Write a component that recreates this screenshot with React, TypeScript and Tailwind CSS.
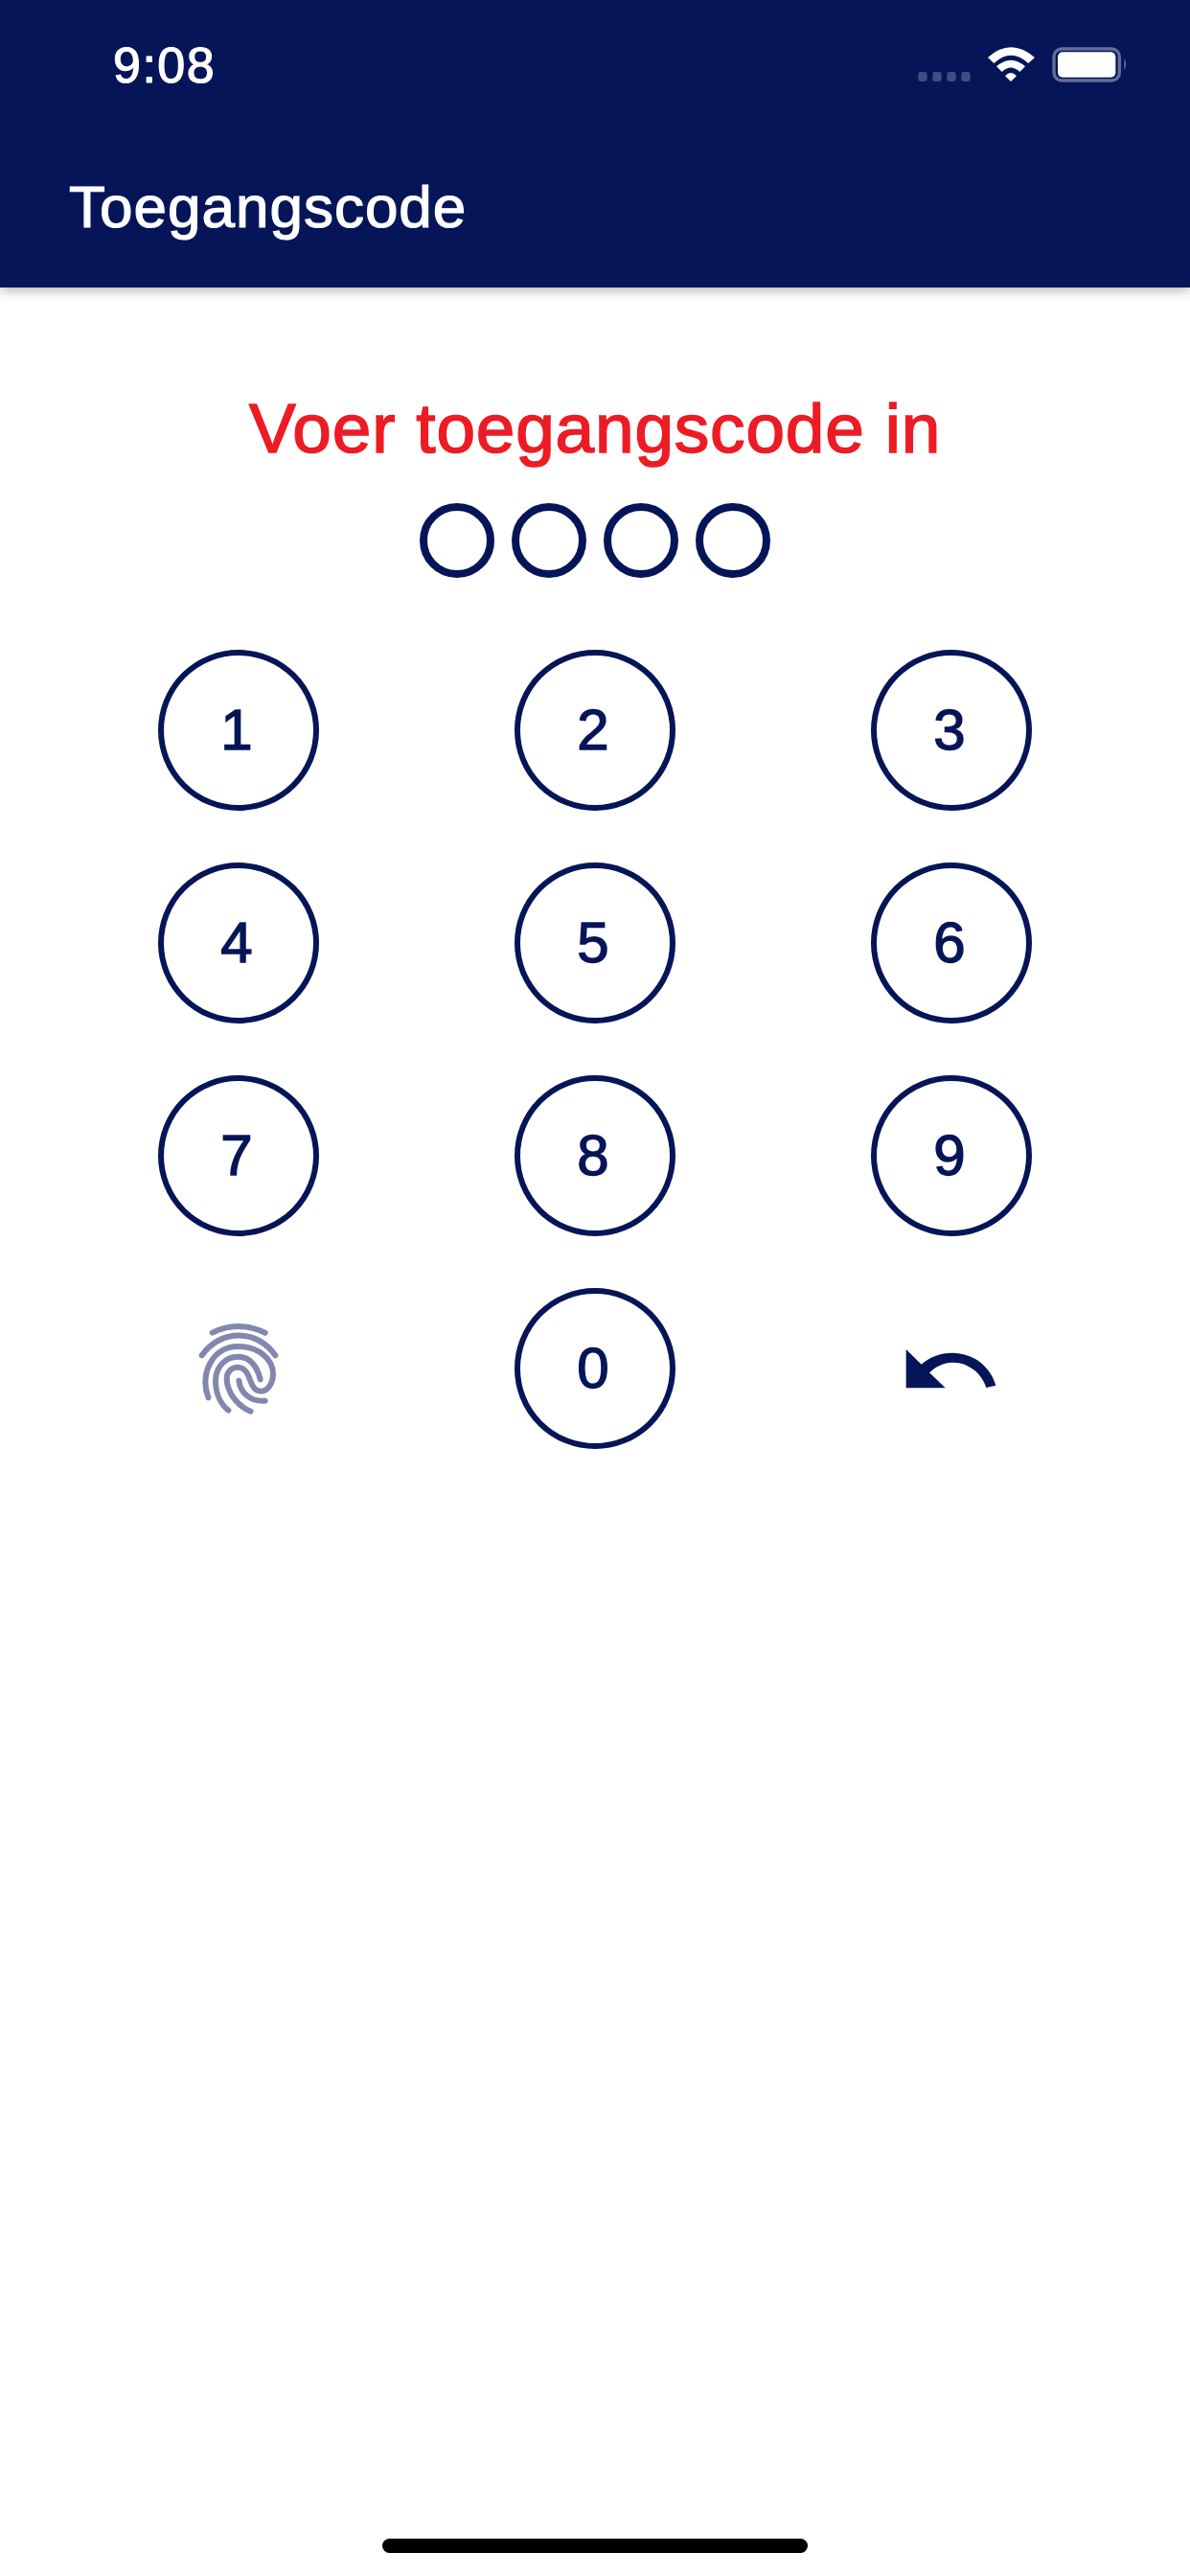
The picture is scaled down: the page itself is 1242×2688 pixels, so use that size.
export default function App() {
  const keys = ["1", "2", "3", "4", "5", "6", "7", "8", "9"];
  const circle =
    "w-[168px] h-[168px] rounded-full border-[6px] border-[#051557] flex items-center justify-center pr-[4px] text-[60px] leading-none text-[#051557] [-webkit-text-stroke:1.4px_#051557]";
  return (
    <div className="w-[1242px] h-[2688px] bg-white flex flex-col font-['Liberation_Sans',Arial,sans-serif]">
      <header className="h-[300px] bg-[#051557] shadow-[0_3px_12px_rgba(0,0,0,0.3)] flex flex-col shrink-0">
        <div className="flex justify-between items-start pt-[30px] h-[100px]">
          <span className="pl-[118px] text-[52px] leading-[76px] tracking-[1.5px] text-white [-webkit-text-stroke:1.2px_#fff]">9:08</span>
          <svg width="260" height="70" viewBox="0 0 780 210" className="mr-[52px]">
            <g fill="#414c80">
              <rect x="85" y="135" width="28" height="30" rx="8" />
              <rect x="130" y="135" width="28" height="30" rx="8" />
              <rect x="175" y="135" width="28" height="30" rx="8" />
              <rect x="220" y="135" width="28" height="30" rx="8" />
            </g>
            <g fill="#fff">
              <path d="M303 90 Q375 26 450 90 L430 108 Q375 58 322 108 Z" />
              <path d="M330 118 Q375 78 420 118 L403 135 Q375 108 347 135 Z" />
              <path d="M357 148 Q375 128 393 148 L375 165 Z" />
            </g>
            <rect x="510" y="63" width="205" height="99" rx="24" fill="none" stroke="#656e9a" strokeWidth="10" />
            <rect x="522" y="73" width="181" height="79" rx="15" fill="#fff" />
            <path d="M730 93 Q741 110 730 130 Z" fill="#656e9a" />
          </svg>
        </div>
        <div className="pl-[72px] text-[62px] leading-[72px] mt-[80px] tracking-[1px] text-white [-webkit-text-stroke:1.2px_#fff]">Toegangscode</div>
      </header>

      <main className="flex flex-col items-center flex-1">
        <h1 className="mt-[105px] text-[73px] leading-[84px] tracking-[0.8px] text-[#ed1c24] font-normal [-webkit-text-stroke:1.6px_#ed1c24]">Voer toegangscode in</h1>
        <div className="mt-[36px] flex gap-[18px]">
          {[0, 1, 2, 3].map((i) => (
            <div key={i} className="w-[78px] h-[78px] rounded-full border-[8px] border-[#051557]" />
          ))}
        </div>
        <div className="mt-[75px] w-full px-[63px] grid grid-cols-3 gap-y-[54px] justify-items-center">
          {keys.map((k) => (
            <div key={k} className={circle}>{k}</div>
          ))}
          <div className="w-[168px] h-[168px]">
            <svg width="168" height="168" viewBox="-45 -18 504 504" fill="none" stroke="#8288ad" strokeWidth="18" strokeLinecap="round">
              <path d="M125 122 Q205 82 290 122" />
              <path d="M92 193 C150 110 265 110 322 193" />
              <path d="M112 325 C85 250 125 165 205 165 C270 165 315 205 315 250 C315 285 295 305 278 305 C258 305 250 290 243 270 C235 245 222 230 205 230 C185 230 170 245 170 265 C170 305 200 350 245 368" />
              <path d="M275 268 C265 225 240 197 205 197 C165 197 135 230 135 272 C135 310 150 345 175 365" />
              <path d="M208 272 C212 310 245 340 290 335" />
            </svg>
          </div>
          <div className={circle}>0</div>
          <div className="w-[168px] h-[168px]">
            <svg width="168" height="168" viewBox="-33 -108 504 504" fill="#051557">
              <path d="M77 84 L125 131 C150 108 185 95 222 95 C285 95 340 135 358 197 L328 204 C312 157 272 125 222 125 C195 125 170 138 150 157 L200 205 L77 205 Z" />
            </svg>
          </div>
        </div>
        <div className="mt-auto mb-[24px] w-[444px] h-[15px] rounded-full bg-black" />
      </main>
    </div>
  );
}
